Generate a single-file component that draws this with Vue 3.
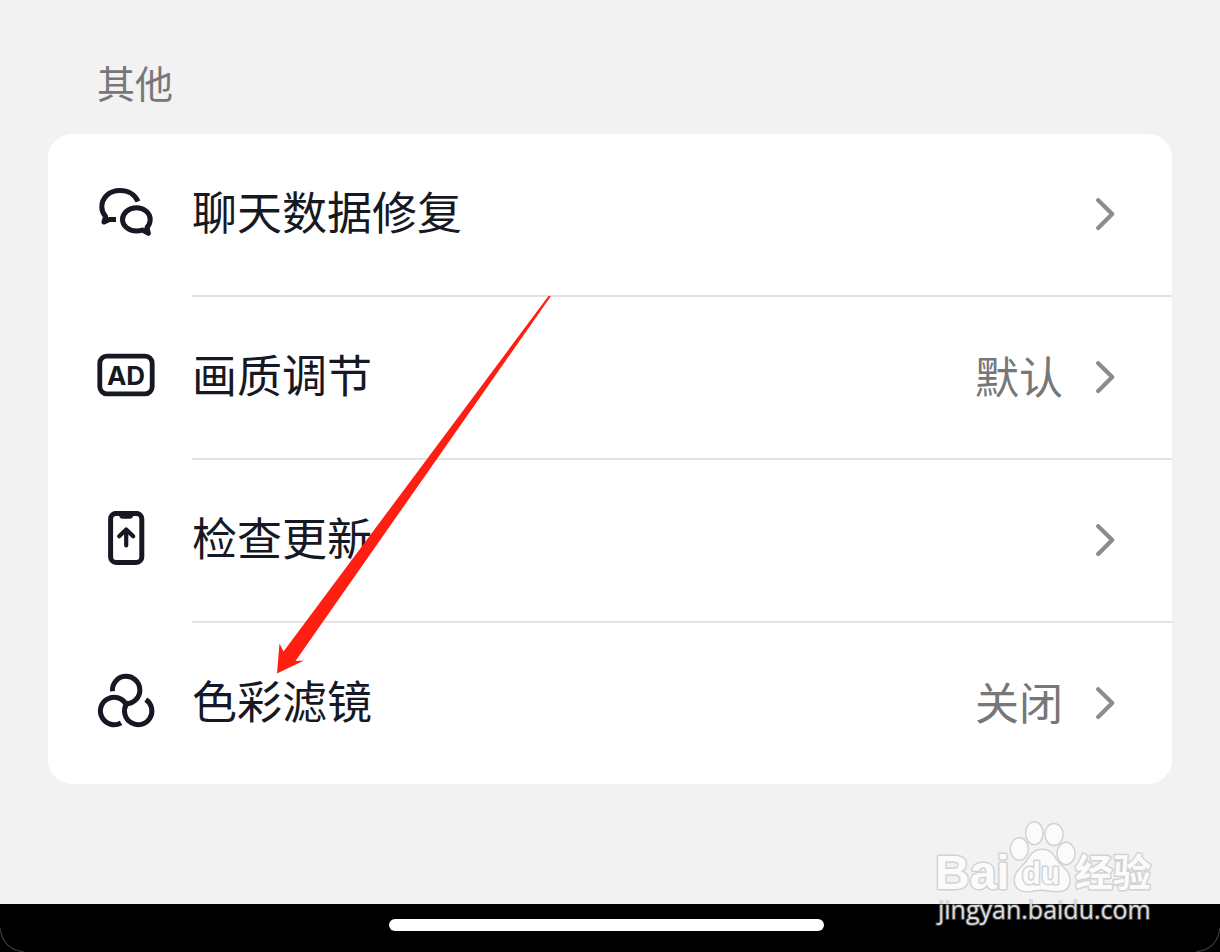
<template>
  <div class="page">
    <main class="settings">
      <h2 class="section-title">其他</h2>

      <div class="card">
        <button v-for="item in items" :key="item.id" type="button" class="row">
          <svg class="icon" viewBox="0 0 60 61" fill="none" aria-hidden="true">
            <g v-if="item.id === 'chat'" stroke="currentColor" stroke-width="5" stroke-linejoin="round">
              <path d="M42 16.5C39 9.5 32 5.5 24 5.5C13 5.5 5.8 13 5.8 22c0 3.6 1.4 6.8 3.8 9.4L8 37L13.5 34.4L20 34.4" />
              <path d="M51 42.5C53 40.2 54.2 37.5 54.2 34.5C54.2 27.8 48 22.8 40.4 22.8S26.5 28 26.5 34.5S32.6 46 40.4 46C42.6 46 44.6 45.7 46.4 45L52.4 48.3Z" />
            </g>
            <g v-else-if="item.id === 'quality'">
              <rect x="3.8" y="8.2" width="52.4" height="37.6" rx="7" stroke="currentColor" stroke-width="4.8" />
              <text class="ad" x="30" y="37" text-anchor="middle">AD</text>
            </g>
            <g v-else-if="item.id === 'update'" stroke="currentColor" stroke-linecap="round" stroke-linejoin="round">
              <rect x="14.6" y="2.4" width="31.2" height="49" rx="5.5" stroke-width="5" />
              <path d="M23 3H37.4C37.4 6.4 36 7.8 33.6 7.8H26.8C24.4 7.8 23 6.4 23 3Z" fill="currentColor" stroke="none" />
              <path d="M30.2 34.4V19M23.2 25.2L30.2 18.4L37.2 25.2" stroke-width="4.2" />
            </g>
            <g v-else stroke="currentColor" stroke-width="5">
              <path d="M16.5 18.2A13.7 13.7 0 1 1 30.2 30.7" />
              <path d="M25 49.8A13.7 13.7 0 1 1 30 31.2" />
              <path d="M49.8 26.6A13.7 13.7 0 1 1 30.3 31.2L32.5 29.5" />
            </g>
          </svg>

          <span class="row-body">
            <span class="label">{{ item.label }}</span>
            <span v-if="item.value" class="value">{{ item.value }}</span>
            <svg class="chevron" viewBox="0 0 20 33" fill="none" aria-hidden="true">
              <path d="M2.2 2.2L16.2 16L2.2 30" stroke="currentColor" stroke-width="4.2" stroke-linecap="round" stroke-linejoin="round" />
            </svg>
          </span>
        </button>

        <!-- Flecha que apunta a la última opción -->
        <svg class="pointer" viewBox="0 0 276 379" aria-hidden="true">
          <path d="M275 1L19.5 366L28 365.5L1 378.5L3.5 348.5L7.5 356.5L272.5 1Z" fill="#ff1f12" />
        </svg>
      </div>
    </main>

    <footer class="home-bar">
      <span class="indicator"></span>

      <svg class="watermark" viewBox="0 0 230 112" aria-hidden="true">
        <g class="mark">
          <text class="bai" x="5" y="73">Bai</text>
          <ellipse cx="89.3" cy="33" rx="8.3" ry="10.5" />
          <ellipse cx="104.3" cy="17.3" rx="8" ry="10.7" />
          <ellipse cx="124" cy="18.5" rx="8.4" ry="10.3" />
          <ellipse cx="136" cy="37.5" rx="8.3" ry="10.4" />
          <path d="M112 34C119 34 122 37.5 126 44C130 50.5 139.3 54 139.3 64C139.3 72 134 75 127 75C121 75 118 73.5 112 73.5S103 75 97 75C90 75 85 71.5 85 64C85 55 94 50.5 98 44C102 37.5 105 34 112 34Z" />
          <text class="du" x="92" y="68">du</text>
          <text class="jingyan" x="145" y="70">经验</text>
        </g>
        <text class="site" x="8" y="103">jingyan.baidu.com</text>
      </svg>
    </footer>
  </div>
</template>

<script setup>
// Opciones de la sección
const items = [
  { id: 'chat', label: '聊天数据修复', value: '' },
  { id: 'quality', label: '画质调节', value: '默认' },
  { id: 'update', label: '检查更新', value: '' },
  { id: 'filter', label: '色彩滤镜', value: '关闭' }
]
</script>

<style>
body {
  margin: 0;
  background: #000;
}
</style>

<style scoped>
.page {
  min-height: 100vh;
  display: flex;
  flex-direction: column;
  background: #f2f2f2;
  color: #161823;
  font-family: 'Noto Sans CJK SC', sans-serif;
}

.settings {
  flex: 1;
  padding: 54px 48px 120px;
}

.section-title {
  margin: 0;
  padding: 0 49px 24px;
  font-size: 38px;
  line-height: 56px;
  font-weight: 400;
  color: #77777a;
}

.card {
  position: relative;
  background: #fff;
  border-radius: 24px;
}

.row {
  display: flex;
  align-items: center;
  gap: 36px;
  width: 100%;
  padding: 0 0 0 48px;
  border: none;
  background: none;
  color: inherit;
  font: inherit;
  text-align: left;
  cursor: pointer;
}

.icon {
  flex: none;
  width: 60px;
  height: 61px;
}

.ad {
  font-family: Inter, sans-serif;
  font-size: 26px;
  font-weight: 700;
  fill: currentColor;
}

.row-body {
  flex: 1;
  display: flex;
  align-items: center;
  min-height: 161px;
  padding-right: 56px;
  border-bottom: 2px solid #e3e3e4;
}

.row:last-of-type .row-body {
  border-bottom: none;
}

.label {
  flex: 1;
  padding-bottom: 8px;
  font-size: 45px;
  line-height: 64px;
}

.value {
  margin-right: 33px;
  padding-bottom: 5px;
  font-size: 44px;
  line-height: 64px;
  color: #77777a;
}

.chevron {
  flex: none;
  width: 20px;
  height: 33px;
  color: #8c8c8e;
}

.pointer {
  position: absolute;
  left: 228px;
  top: 161px;
  width: 276px;
  height: 379px;
  pointer-events: none;
}

.home-bar {
  position: relative;
  display: flex;
  justify-content: center;
  padding: 15px 32px 21px 24px;
  background: #000;
}

/* Borde curvo de la pantalla */
.home-bar::before {
  content: '';
  position: absolute;
  inset: 0;
  border: 1px solid #444;
  border-width: 0 1px 1px;
  border-radius: 0 0 24px 24px;
  clip-path: polygon(0 50%, 24px 100%, calc(100% - 24px) 100%, 100% 50%, 100% 100%, 0 100%);
}

.indicator {
  width: 435px;
  height: 12px;
  border-radius: 6px;
  background: #fff;
}

.watermark {
  position: absolute;
  right: 60px;
  bottom: 24px;
  width: 230px;
  height: 112px;
}

.mark {
  fill: #fbfbfb;
  stroke: #d2d2d2;
  stroke-width: 3px;
  stroke-linejoin: round;
  paint-order: stroke;
}

.bai {
  font-family: 'Liberation Sans', sans-serif;
  font-size: 48px;
  font-weight: 700;
}

.du {
  font-family: 'Liberation Sans', sans-serif;
  font-size: 31px;
  font-weight: 700;
}

.jingyan {
  font-size: 38px;
  font-weight: 700;
}

.site {
  font-family: 'Open Sans', sans-serif;
  font-size: 25px;
  font-weight: 500;
  fill: #dcdcdc;
  stroke: rgba(170, 170, 170, 0.4);
  stroke-width: 2px;
  paint-order: stroke;
}
</style>
